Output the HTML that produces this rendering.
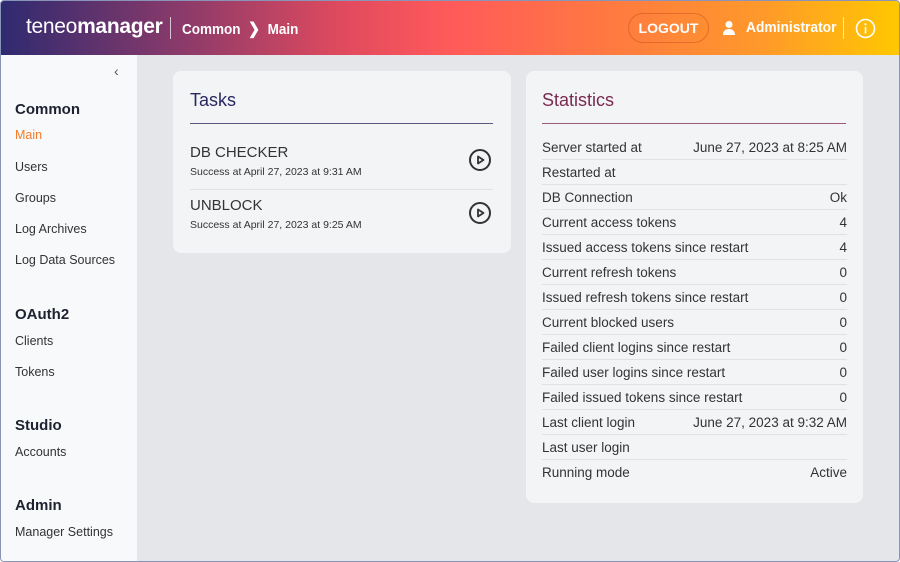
<!DOCTYPE html>
<html><head><style>
*{margin:0;padding:0;box-sizing:border-box}
body{width:900px;height:562px;overflow:hidden;font-family:"Liberation Sans",sans-serif;background:#fff;position:relative}
.frame{position:absolute;left:0;top:0;width:900px;height:562px;border:1px solid #8a93b8;border-radius:4px;overflow:hidden;background:#e4e6ea}
.hdr{position:absolute;left:-1px;top:-1px;width:900px;height:55px;background:linear-gradient(90deg,#2e2a70 0%,#8a3a6a 20%,#e04a5e 38%,#ff5a5a 50%,#ff7a40 68%,#ff9a2a 85%,#ffc800 100%);color:#fff}
.logo{position:absolute;left:26px;top:15px;font-size:21px;letter-spacing:-0.3px}
.logo b{font-weight:bold}
.sep{position:absolute;top:17px;width:1px;height:22px;background:rgba(255,255,255,.7)}
.crumb{position:absolute;left:182px;top:19px;font-size:15px;font-weight:bold;transform:scaleX(.9);transform-origin:left}
.logout{position:absolute;left:628px;top:13px;width:81px;height:30px;border:1px solid rgba(200,80,30,.5);border-radius:15px;font-size:14px;font-weight:bold;text-align:center;line-height:28px}
.admin{position:absolute;left:746px;top:19px;font-size:15px;font-weight:bold;transform:scaleX(.92);transform-origin:left}
.side{position:absolute;left:0;top:54px;width:136px;height:507px;background:#f8f9fb}
.side .h{position:absolute;left:14px;font-size:15px;font-weight:bold;color:#1e2230}
.side .i{position:absolute;left:14px;font-size:12.5px;color:#333}
.card{position:absolute;background:#f3f4f6;border-radius:8px}
.t{position:absolute;font-size:18px}
.row{position:absolute;left:16px;right:16px;height:25px;border-bottom:1px solid #e0e1e5;font-size:13.5px;color:#333;line-height:25px}
.row span{position:absolute;right:0}
</style></head><body><div class="frame">
<div class="hdr">
<div class="logo">teneo<b>manager</b></div>
<div class="sep" style="left:170px"></div>
<div class="crumb">Common&nbsp; <span style="font-size:16px">&#10095;</span>&nbsp; Main</div>
<div class="logout">LOGOUT</div>
<svg style="position:absolute;left:722px;top:20px" width="14" height="16" viewBox="0 0 14 16"><circle cx="7" cy="4.5" r="3.5" fill="#fff"/><path d="M1 15c0-4 2.5-6 6-6s6 2 6 6z" fill="#fff"/></svg>
<div class="admin">Administrator</div>
<div class="sep" style="left:843px"></div>
<svg style="position:absolute;left:855px;top:18px" width="21" height="21" viewBox="0 0 21 21"><circle cx="10.5" cy="10.5" r="9" fill="none" stroke="#fff" stroke-width="1.6"/><rect x="9.7" y="9" width="1.6" height="6.5" fill="#fff"/><circle cx="10.5" cy="6.3" r="1.1" fill="#fff"/></svg>
</div>
<div class="side">
<div style="position:absolute;left:113px;top:8px;font-size:14px;color:#555">&#8249;</div>
<div class="h" style="top:46px">Common</div>
<div class="i" style="top:73px;color:#f37b2a">Main</div>
<div class="i" style="top:105px">Users</div>
<div class="i" style="top:136px">Groups</div>
<div class="i" style="top:167px">Log Archives</div>
<div class="i" style="top:198px">Log Data Sources</div>
<div class="h" style="top:251px">OAuth2</div>
<div class="i" style="top:279px">Clients</div>
<div class="i" style="top:310px">Tokens</div>
<div class="h" style="top:362px">Studio</div>
<div class="i" style="top:390px">Accounts</div>
<div class="h" style="top:442px">Admin</div>
<div class="i" style="top:470px">Manager Settings</div>
</div>
<div class="card" style="left:172px;top:70px;width:338px;height:182px">
<div class="t" style="left:17px;top:19px;color:#2a2860">Tasks</div>
<div style="position:absolute;left:17px;top:52px;width:303px;height:1px;background:#5a5a80"></div>
<div style="position:absolute;left:17px;top:73px;font-size:15px;color:#333">DB CHECKER</div>
<div style="position:absolute;left:17px;top:95px;font-size:10.5px;color:#333">Success at April 27, 2023 at 9:31 AM</div>
<div style="position:absolute;left:17px;top:118px;width:303px;height:1px;background:#e0e1e5"></div>
<div style="position:absolute;left:17px;top:126px;font-size:15px;color:#333">UNBLOCK</div>
<div style="position:absolute;left:17px;top:148px;font-size:10.5px;color:#333">Success at April 27, 2023 at 9:25 AM</div>
<svg style="position:absolute;left:295px;top:77px" width="24" height="24" viewBox="0 0 24 24"><circle cx="12" cy="12" r="10" fill="none" stroke="#333" stroke-width="2"/><path d="M10 8.5v7l5.5-3.5z" fill="none" stroke="#333" stroke-width="1.8" stroke-linejoin="round"/></svg>
<svg style="position:absolute;left:295px;top:130px" width="24" height="24" viewBox="0 0 24 24"><circle cx="12" cy="12" r="10" fill="none" stroke="#333" stroke-width="2"/><path d="M10 8.5v7l5.5-3.5z" fill="none" stroke="#333" stroke-width="1.8" stroke-linejoin="round"/></svg>
</div>
<div class="card" style="left:525px;top:70px;width:337px;height:432px">
<div class="t" style="left:16px;top:19px;color:#7a2a50">Statistics</div>
<div style="position:absolute;left:16px;top:52px;width:304px;height:1px;background:#9a5a78"></div>
<div class="row" style="top:64px">Server started at<span>June 27, 2023 at 8:25 AM</span></div>
<div class="row" style="top:89px">Restarted at</div>
<div class="row" style="top:114px">DB Connection<span>Ok</span></div>
<div class="row" style="top:139px">Current access tokens<span>4</span></div>
<div class="row" style="top:164px">Issued access tokens since restart<span>4</span></div>
<div class="row" style="top:189px">Current refresh tokens<span>0</span></div>
<div class="row" style="top:214px">Issued refresh tokens since restart<span>0</span></div>
<div class="row" style="top:239px">Current blocked users<span>0</span></div>
<div class="row" style="top:264px">Failed client logins since restart<span>0</span></div>
<div class="row" style="top:289px">Failed user logins since restart<span>0</span></div>
<div class="row" style="top:314px">Failed issued tokens since restart<span>0</span></div>
<div class="row" style="top:339px">Last client login<span>June 27, 2023 at 9:32 AM</span></div>
<div class="row" style="top:364px">Last user login</div>
<div class="row" style="top:389px;border:none">Running mode<span>Active</span></div>
</div>
</div></body></html>
